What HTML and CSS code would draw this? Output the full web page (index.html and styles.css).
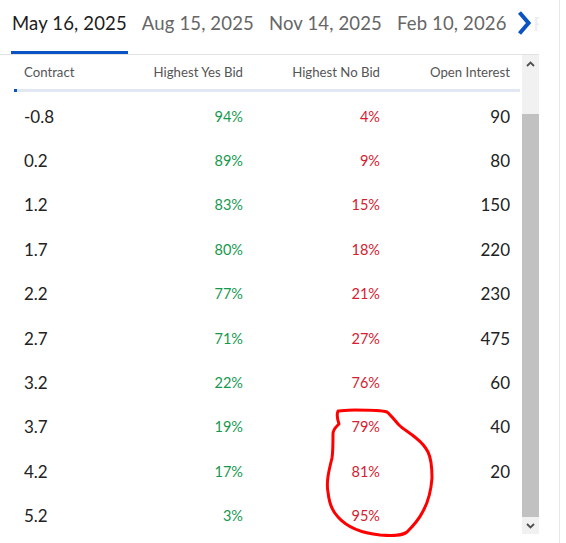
FILE: index.html
```html
<!DOCTYPE html>
<html>
<head>
<meta charset="utf-8">
<link rel="stylesheet" href="styles.css">
</head>
<body>
<div class="page">
  <div class="tabs">
    <div class="tab active">May 16, 2025</div>
    <div class="tab">Aug 15, 2025</div>
    <div class="tab">Nov 14, 2025</div>
    <div class="tab">Feb 10, 2026</div>
    <div class="next">
      <svg width="14" height="26" viewBox="0 0 14 26"><path d="M2.5 2.5 L11.5 13 L2.5 23.5" fill="none" stroke="#0b52c2" stroke-width="4" stroke-linejoin="miter"/></svg>
      <span class="ghost">Fe</span>
    </div>
  </div>
  <div class="body">
    <div class="table">
      <div class="head">
        <div class="c1">Contract</div>
        <div class="c2">Highest Yes Bid</div>
        <div class="c3">Highest No Bid</div>
        <div class="c4">Open Interest</div>
      </div>
      <div class="headline"><span class="dot"></span></div>
      <div class="rows">
        <div class="row"><div class="c1">-0.8</div><div class="c2 yes">94%</div><div class="c3 no">4%</div><div class="c4">90</div></div>
        <div class="row"><div class="c1">0.2</div><div class="c2 yes">89%</div><div class="c3 no">9%</div><div class="c4">80</div></div>
        <div class="row"><div class="c1">1.2</div><div class="c2 yes">83%</div><div class="c3 no">15%</div><div class="c4">150</div></div>
        <div class="row"><div class="c1">1.7</div><div class="c2 yes">80%</div><div class="c3 no">18%</div><div class="c4">220</div></div>
        <div class="row"><div class="c1">2.2</div><div class="c2 yes">77%</div><div class="c3 no">21%</div><div class="c4">230</div></div>
        <div class="row"><div class="c1">2.7</div><div class="c2 yes">71%</div><div class="c3 no">27%</div><div class="c4">475</div></div>
        <div class="row"><div class="c1">3.2</div><div class="c2 yes">22%</div><div class="c3 no">76%</div><div class="c4">60</div></div>
        <div class="row"><div class="c1">3.7</div><div class="c2 yes">19%</div><div class="c3 no">79%</div><div class="c4">40</div></div>
        <div class="row"><div class="c1">4.2</div><div class="c2 yes">17%</div><div class="c3 no">81%</div><div class="c4">20</div></div>
        <div class="row"><div class="c1">5.2</div><div class="c2 yes">3%</div><div class="c3 no">95%</div><div class="c4"></div></div>
      </div>
    </div>
    <div class="scrollbar">
      <div class="sbtn"><svg width="9" height="6" viewBox="0 0 9 6"><path d="M1 5 L4.5 1.5 L8 5" fill="none" stroke="#505050" stroke-width="1.8"/></svg></div>
      <div class="track"><div class="thumb"></div></div>
      <div class="sbtn"><svg width="9" height="6" viewBox="0 0 9 6"><path d="M1 1 L4.5 4.5 L8 1" fill="none" stroke="#505050" stroke-width="1.8"/></svg></div>
    </div>
  </div>
  <svg class="annot" width="566" height="543" viewBox="0 0 566 543">
    <path d="M338 411 C336 416 338 421 339 424 C336 427 333 429 333 434 C333 445 333 452 332 458 C329 470 326 482 328 492 C329 502 331 510 338 517 C346 526 360 533 380 535 C393 536 402 536 407 532 C413 526 419 519 422 513 C428 503 431 492 432 478 C432 465 431 458 428 452 C425 446 421 442 416 438 C410 433 403 429 399 425 C395 421 391 415 387 412 C381 410 370 410 355 410 C346 410 340 411 338 411 Z" fill="none" stroke="#ff0000" stroke-width="3" stroke-linejoin="round" stroke-linecap="round"/>
  </svg>
</div>
</body>
</html>
```

FILE: styles.css
```css
* { box-sizing: border-box; }
html, body { margin: 0; padding: 0; background: #fff; }
body { font-family: Lato, "Open Sans", "Liberation Sans", sans-serif; color: #222; }

.page {
  position: relative;
  width: 560px;
  height: 543px;
  border-right: 1px solid #e6e6e6;
  overflow: hidden;
}

.tabs {
  display: flex;
  align-items: flex-start;
  height: 55px;
  border-bottom: 1px solid #e2e2e2;
  width: 539px;
  padding-left: 11px;
  white-space: nowrap;
  overflow: hidden;
}
.tab {
  font-size: 18.5px;
  color: #666;
  padding: 12px 1px 0 1px;
  height: 54px;
  margin-right: 13px;
  letter-spacing: 0.15px;
}
.tab.active {
  color: #1c1c1c;
  border-bottom: 3.5px solid #0b52c2;
  height: 54px;
  margin-bottom: -1px;
}
.tab:nth-child(4) { margin-right: 9px; }
.next {
  display: flex;
  align-items: center;
  padding-top: 10px;
  gap: 3px;
}
.ghost { font-size: 18.5px; color: #ececec; margin-top: 2px; }

.body {
  display: flex;
  width: 539px;
  height: 480px;
}
.table {
  width: 522px;
  padding-left: 14px;
  padding-right: 2px;
}
.head, .row {
  display: grid;
  grid-template-columns: 136px 93px 137px 130px;
}
.head {
  height: 33px;
  align-items: center;
  font-size: 13.2px;
  color: #555;
  padding-top: 1px;
}
.c1 { padding-left: 10px; }
.c2, .c3, .c4 { text-align: right; }
.headline {
  height: 3px;
  background: #e1e8f4;
  position: relative;
}
.dot {
  display: block;
  width: 3px;
  height: 3px;
  background: #0b52c2;
  margin-top: 1px;
}
.rows { padding-top: 2px; }
.row {
  height: 44.4px;
  align-items: center;
}
.row .c1, .row .c4 { font-size: 17px; color: #222; }
.row .c2, .row .c3 { font-size: 14.5px; }
.yes { color: #16994f; }
.no { color: #d5202f; }

.scrollbar {
  width: 17px;
  height: 479px;
  display: flex;
  flex-direction: column;
  background: #f1f1f1;
}
.sbtn {
  height: 17px;
  display: flex;
  align-items: center;
  justify-content: center;
  background: #f1f1f1;
}
.track {
  flex: 1;
  display: flex;
  flex-direction: column;
  justify-content: flex-end;
}
.thumb {
  height: 403px;
  background: #c1c1c1;
}

.annot {
  position: absolute;
  left: 0;
  top: 0;
  pointer-events: none;
}
```
